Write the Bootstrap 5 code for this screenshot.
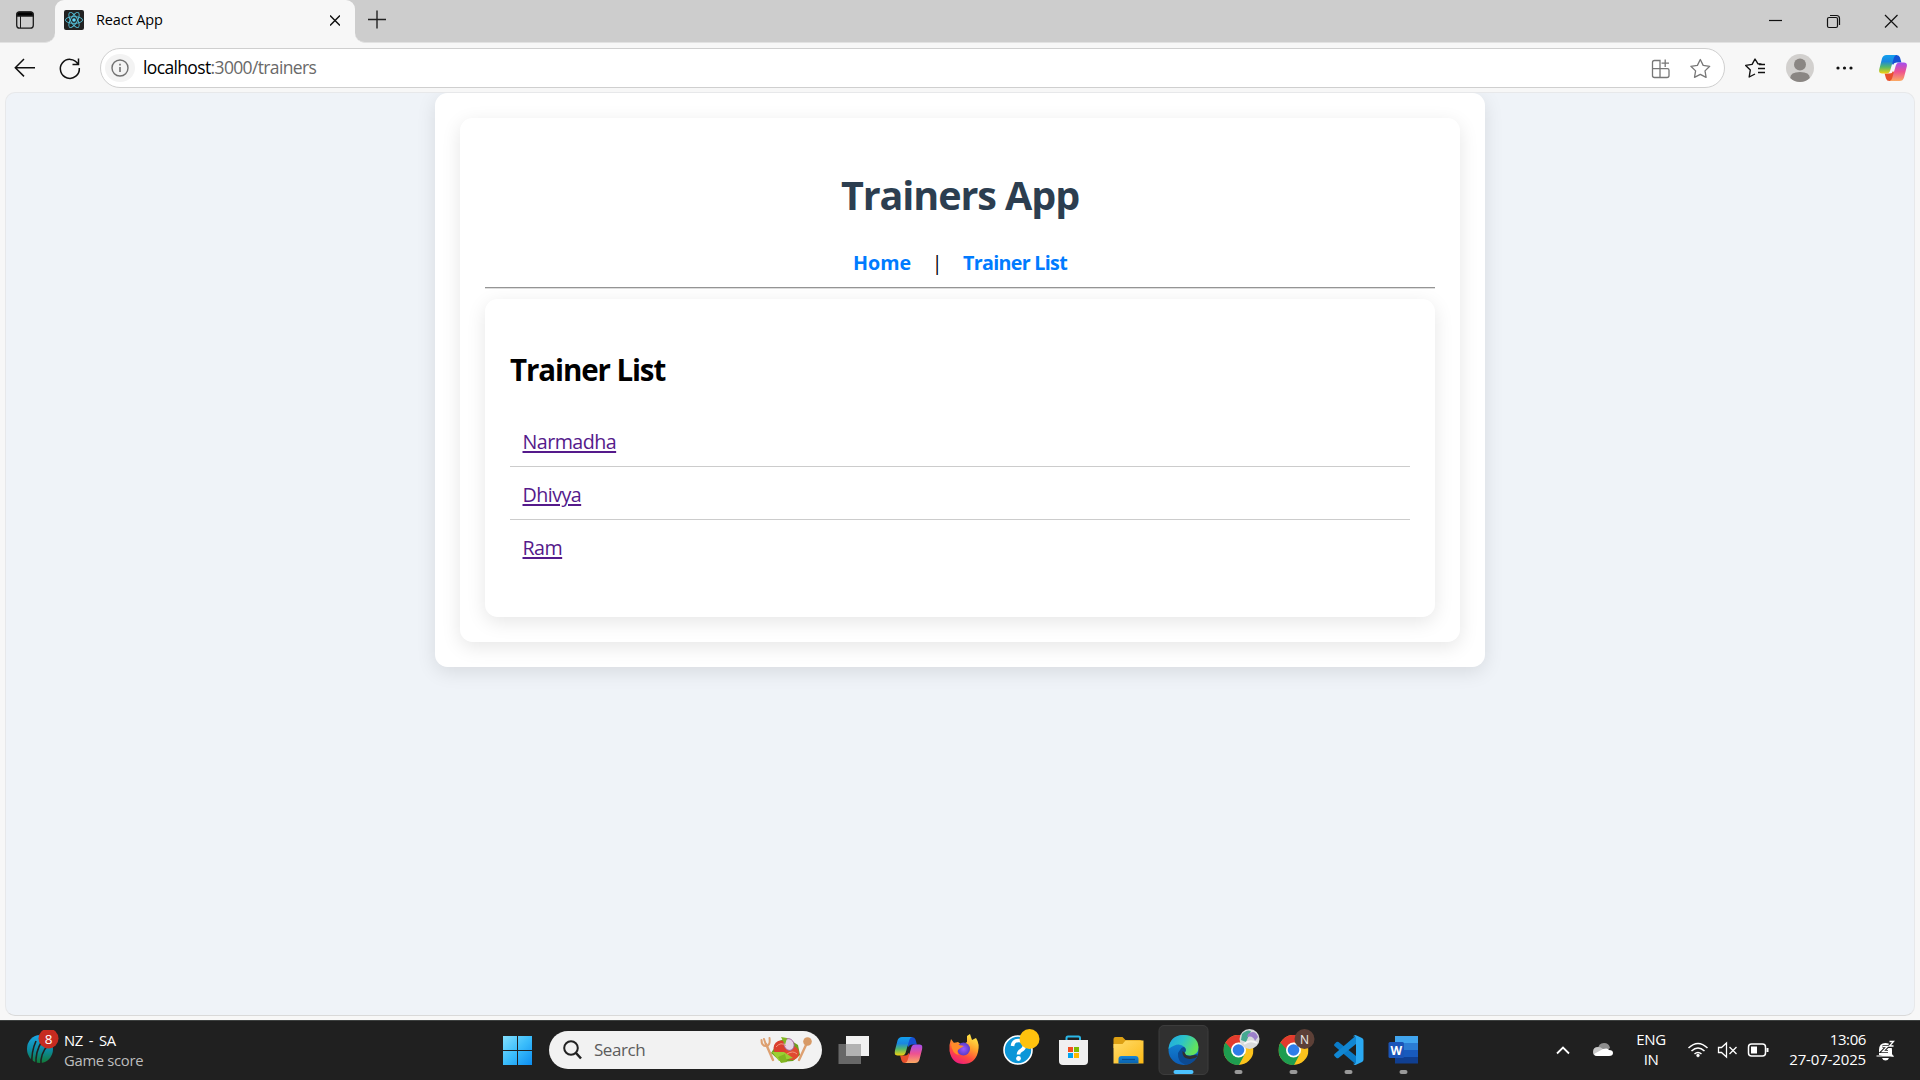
<!DOCTYPE html>
<html lang="en">
<head>
<meta charset="utf-8">
<title>React App</title>
<link href="https://cdn.jsdelivr.net/npm/bootstrap@5.3.0/dist/css/bootstrap.min.css" rel="stylesheet">
<style>
body{font-family:"Open Sans","Noto Sans",sans-serif;height:1080px;overflow:hidden;background:#f7f7f7;color:#000}
svg{display:block;flex:none}
.tabstrip{height:43px;background:#cdcdcd}
.tab-actions{width:55px;background:#cdcdcd;border-bottom-right-radius:10px;border-bottom:1px solid #e2e2e2}
.tab-under{background:#f7f7f7}
.browser-tab{width:300px;background:#f7f7f7;border-radius:9px 9px 0 0;padding:0 15px 3px 9px}
.tab-name{font-size:14.5px;line-height:20px;letter-spacing:-.12px;margin-left:12px}
.strip-rest{border-bottom-left-radius:10px;background:#cdcdcd;border-bottom:1px solid #e2e2e2}
.toolbar-row{height:49px}
.address{width:1625px;height:40px;margin-top:5px;margin-left:14px;border:1px solid #cfcfcf;border-radius:20px;background:#fff}
.info-dot{width:30px;height:28px;border-radius:50%;background:#f3f3f3;margin-left:4px}
.url{font-size:17.5px;line-height:24px;color:#696969;margin-left:8px;margin-bottom:2px;letter-spacing:-.64px}
.viewport{margin:0 5px 4px;height:924px;background:#eff3f8;border-radius:10px;border:1px solid #e7e8ea;border-bottom-color:#d9d9d9;overflow:hidden}
.panel{background:#fff;border-radius:12.5px;padding:25px;box-shadow:0 5px 19px rgba(0,0,0,.1)}
.app-wrap{width:1050px}
.app-title{font-size:39.500px;line-height:53px;font-weight:700;color:#2c3e50;margin:26px 0 27px;letter-spacing:-1.080px}
.app-nav{font-size:19.700px;line-height:27px;font-weight:700;margin-bottom:11px}
.app-nav a{color:#007bff;text-decoration:none}
.app-nav .to-list{letter-spacing:-.7px}
.divider{font-weight:400;margin:0 20.500px}
.rule{height:2px;background:#959595;border-bottom:1px solid #dedede;margin-bottom:10px}
.list-title{font-size:29.500px;line-height:40px;font-weight:700;margin:26px 0 24px;letter-spacing:-1.100px}
.trainers{margin:0 0 20px}
.trainers li{height:53px;padding:14px 12.5px 0;line-height:28px;font-size:19.700px;letter-spacing:-.55px;border-bottom:1px solid #ccc}
.trainers li:last-child{height:52px;border:0}
.trainers a{color:#551a8b;text-underline-offset:2px;text-decoration-thickness:2px}
.taskbar{height:60px;background:#202020;border-top:1px solid #3d403f;padding-bottom:1px;color:#fff}
.widget-box{width:490px;padding-left:26px}
.widget-text{font-size:14.8px;line-height:20px;letter-spacing:-.3px;margin-left:4px;padding-bottom:1px}
.fixture{word-spacing:2.200px}
.status-line{color:#bdbdbd}
.search-pill{width:273px;height:38px;border-radius:19px;background:#f2f2f2;margin-left:16px;margin-right:4px;padding:0 10px 0 14px;color:#5c5c5c;font-size:17px;letter-spacing:-.45px}
.search-label{margin-left:11px}
.tray-text{font-size:15px;line-height:20px;letter-spacing:-.4px;padding-bottom:2px}
.lang{width:54px}
.clock{width:94px}
.day{letter-spacing:-.15px}
</style>
<script src="https://cdn.jsdelivr.net/npm/bootstrap@5.3.0/dist/js/bootstrap.bundle.min.js"></script>
</head>
<body class="d-flex flex-column">
<svg width="0" height="0" class="position-absolute">
 <defs>
  <linearGradient id="cpA" x1="0" y1="0" x2="0" y2="1"><stop offset="0" stop-color="#12a0ee"/><stop offset=".35" stop-color="#1b87e0"/><stop offset=".65" stop-color="#55b86a"/><stop offset="1" stop-color="#f4d10d"/></linearGradient>
  <linearGradient id="cpB" x1="0" y1="0" x2="0" y2="1"><stop offset="0" stop-color="#a34ef0"/><stop offset=".5" stop-color="#ee5290"/><stop offset="1" stop-color="#fbaa62"/></linearGradient>
  <linearGradient id="win" gradientUnits="userSpaceOnUse" x1="503" y1="1036" x2="532" y2="1065"><stop offset="0" stop-color="#83dffd"/><stop offset=".5" stop-color="#3bbdfb"/><stop offset="1" stop-color="#0c8df0"/></linearGradient>
  <linearGradient id="fold" x1="0" y1="0" x2="1" y2="1"><stop offset="0" stop-color="#ffdc6c"/><stop offset="1" stop-color="#fcb914"/></linearGradient>
  <linearGradient id="blu" x1="0" y1="0" x2="0" y2="1"><stop offset="0" stop-color="#1687d9"/><stop offset="1" stop-color="#0961ad"/></linearGradient>
  <linearGradient id="edT" x1="0" y1="0" x2="1" y2=".4"><stop offset="0" stop-color="#1fa5e4"/><stop offset=".5" stop-color="#2cc3c9"/><stop offset="1" stop-color="#62e35c"/></linearGradient>
  <linearGradient id="edB" x1="0" y1="0" x2="0" y2="1"><stop offset="0" stop-color="#158fdc"/><stop offset="1" stop-color="#0c5cb5"/></linearGradient>
  <linearGradient id="ffx" x1=".8" y1="0" x2=".3" y2="1"><stop offset="0" stop-color="#fff04a"/><stop offset=".4" stop-color="#ffa12b"/><stop offset=".7" stop-color="#ff4d3d"/><stop offset="1" stop-color="#ec1a80"/></linearGradient>
  <radialGradient id="ffp"><stop offset="0" stop-color="#9a59ff"/><stop offset="1" stop-color="#5a3cc8"/></radialGradient>
  <linearGradient id="globe" x1="0" y1="0" x2="0" y2="1"><stop offset="0" stop-color="#1ba7e6"/><stop offset=".55" stop-color="#0c8a9d"/><stop offset="1" stop-color="#127a37"/></linearGradient>
  <symbol id="copilot" viewBox="0 0 28 26">
   <path d="M14 0h3.6q2.6 0 3.4 2.6l1.4 4.9h-5q-2.7 0-3.4 2.5L12 7z" fill="#1552d4"/>
   <path d="M14 26h-3.6Q7.800 26 7 23.400L5.600 18.500h5q2.700 0 3.400-2.500L16 19z" fill="#e8502c"/>
   <path d="M7.500 0h10q-2 .4-2.700 3l-3.600 12.500q-.9 3-3.800 3H3.200q-3.800 0-3-4L3 3.500Q4 0 7.500 0z" fill="url(#cpA)"/>
   <path d="M20.500 26h-10q2-.4 2.700-3l3.600-12.500q.9-3 3.800-3h4.200q3.800 0 3 4L25 22.500Q24 26 20.500 26z" fill="url(#cpB)"/>
  </symbol>
  <symbol id="chrome" viewBox="0 0 30 30">
   <circle cx="15" cy="15" r="15" fill="#fcc31c"/>
   <path d="M15 15L2 7.500A15 15 0 0 0 15.500 30L21.500 18.700z" fill="#1e9d50"/>
   <path d="M15 15H8.500L2 7.500A15 15 0 0 1 28 7.500H15z" fill="#e33b2e"/>
   <circle cx="15" cy="15" r="7.500" fill="#fff"/><circle cx="15" cy="15" r="5.800" fill="#2f7de9"/>
  </symbol>
 </defs>
</svg>

<header class="flex-shrink-0">
 <div class="tabstrip d-flex">
  <div class="tab-under"><div class="tab-actions h-100 d-flex align-items-center">
   <svg width="55" height="42" fill="none" stroke="#1b1b1b" stroke-width="1.300"><rect x="16.700" y="12.200" width="16.600" height="16" rx="3"/><path d="M17 14q0-2 2.500-2h11q2.500 0 2.500 2v2H17z" fill="#000"/><path d="M20.500 16v12" stroke-width="1"/></svg>
  </div></div>
  <div class="browser-tab d-flex align-items-center">
   <svg width="20" height="20" viewBox="0 0 20 20"><rect width="20" height="20" rx="2" fill="#222"/><g fill="none" stroke="#55bfd8" stroke-width=".9"><ellipse cx="10" cy="10" rx="8.600" ry="3.400"/><ellipse cx="10" cy="10" rx="8.600" ry="3.400" transform="rotate(60 10 10)"/><ellipse cx="10" cy="10" rx="8.600" ry="3.400" transform="rotate(120 10 10)"/></g><circle cx="10" cy="10" r="1.800" fill="#61dafb"/></svg>
   <span class="tab-name">React App</span>
   <svg class="ms-auto" width="10" height="12"><path d="M0 1.500l10 10M10 1.500L0 11.500" stroke="#111" stroke-width="1.500"/></svg>
  </div>
  <div class="tab-under flex-grow-1"><div class="strip-rest h-100 d-flex align-items-center">
   <svg width="44" height="42"><path d="M13 19.500h18M22 10.500v18" stroke="#222" stroke-width="1.400"/></svg>
   <svg class="ms-auto" width="170" height="42" fill="none" stroke="#111" stroke-width="1.200"><path d="M19 20.500h13"/><rect x="77.500" y="17.500" width="10" height="10" rx="1.500"/><path d="M80 15.500h6.500q3 0 3 3V25"/><path d="M135 15l12.500 12.500M147.500 15L135 27.500"/></svg>
  </div></div>
 </div>
 <div class="toolbar-row d-flex">
  <svg width="86" height="49" viewBox="0 1 86 49" fill="none" stroke="#111" stroke-width="1.500"><path d="M35 25.700H16M24 17l-8.700 8.700L24 34.400"/><path d="M78 22a9.500 9.500 0 1 0 1.300 4M78.500 16.500v6h-6"/></svg>
  <div class="address d-flex align-items-center">
   <div class="info-dot d-flex align-items-center justify-content-center"><svg width="18" height="18" fill="none" stroke="#717171" stroke-width="1.400"><circle cx="9" cy="9" r="8"/><path d="M9 8v5M9 4.800v1.700" stroke-width="1.600"/></svg></div>
   <div class="url"><span class="text-black">localhost</span>:3000/trainers</div>
   <svg class="ms-auto" width="76" height="38" fill="none" stroke="#777" stroke-width="1.300"><path d="M4.500 27.500v-14q0-2 2-2H12v17H6.500q-2 0-2-2zM4.500 19.700h15q1.500 0 1.500 1.500v5.300q0 2-2 2h-7.500M17.200 10.500v7.500M13.500 14.200h7.500"/><path d="M52.300 10.500l2.900 5.900 6.500.9-4.700 4.600 1.100 6.400-5.800-3-5.800 3 1.100-6.400-4.700-4.600 6.500-.9z" stroke-linejoin="round"/></svg>
  </div>
  <svg width="194" height="49" viewBox="1726 43 194 49" class="ms-auto"><g fill="none" stroke="#111" stroke-width="1.400" stroke-linejoin="round"><path d="M1761.500 64.300l-3.500-.5-3-4.800-2.900 5.400-6.400 1 4.600 4.600-1.100 7 5.800-3"/><path d="M1759 64.500h6M1758 68.500h7M1758 72.500h7"/></g>
   <circle cx="1800" cy="68" r="14" fill="#d2d0ce"/><circle cx="1800" cy="64.500" r="6" fill="#8a8683"/><path d="M1790.200 78Q1790.200 72 1800 72t9.800 6A14 14 0 0 1 1790.200 78z" fill="#8a8683"/>
   <g fill="#111"><circle cx="1838" cy="68" r="1.600"/><circle cx="1844.500" cy="68" r="1.600"/><circle cx="1851" cy="68" r="1.600"/></g>
   <use href="#copilot" x="1879" y="55" width="28" height="26"/></svg>
 </div>
</header>

<main class="viewport flex-shrink-0">
 <div class="panel app-wrap mx-auto">
  <div class="panel">
   <h1 class="app-title text-center">Trainers App</h1>
   <nav class="app-nav d-flex justify-content-center"><a href="#">Home</a><span class="divider">|</span><a href="#" class="to-list">Trainer List</a></nav>
   <div class="rule"></div>
   <section class="panel">
    <h2 class="list-title">Trainer List</h2>
    <ul class="trainers list-unstyled"><li><a href="#">Narmadha</a></li><li><a href="#">Dhivya</a></li><li><a href="#">Ram</a></li></ul>
   </section>
  </div>
 </div>
</main>

<footer class="taskbar d-flex align-items-center flex-shrink-0">
 <div class="widget-box d-flex align-items-center">
  <svg width="34" height="40" viewBox="26 1029 34 40"><ellipse cx="40" cy="1048" rx="13" ry="14" fill="url(#globe)"/><path d="M32 1064q-1-13 4-24M36 1064q-1-13 6-24M41 1064q-1-11 7-20" stroke="#202020" stroke-width="1.600" fill="none"/><circle cx="48.500" cy="1037.500" r="10" fill="#c62b20"/><text x="48.500" y="1042.500" font-size="13.500" fill="#fff" text-anchor="middle">8</text></svg>
  <div class="widget-text"><div class="fixture">NZ - SA</div><div class="status-line">Game score</div></div>
 </div>
 <svg width="43" height="60" viewBox="490 1020 43 60"><path d="M503 1036h14v14h-14zM518 1036h14v14h-14zM503 1051h14v14h-14zM518 1051h14v14h-14z" fill="url(#win)"/></svg>
 <div class="search-pill d-flex align-items-center">
  <svg width="20" height="20" fill="none" stroke="#222" stroke-width="2"><circle cx="8" cy="8" r="6.800"/><path d="M13 13l5 5.500" stroke-width="2.600"/></svg>
  <span class="search-label">Search</span>
  <svg class="ms-auto" width="52" height="28" viewBox="0 0 52 28"><g stroke="#dda071" stroke-width="2" fill="none" stroke-linecap="round"><path d="M6 8l7 16M46 9l-7 15" stroke-width="2.400"/><path d="M1.500 4q0 6 4.500 6t3.500-8M4 3l2 6"/></g><circle cx="47.500" cy="5.500" r="4.300" fill="#d79a67"/><path d="M11 17l8-12 8-3 11 7 2 10-7 6-12 1z" fill="#6f9f1c"/><circle cx="21" cy="12" r="7.500" fill="#db3f2e"/><circle cx="32" cy="17" r="7" fill="#e04a31"/><path d="M12 16l7 9 14-3-9-6z" fill="#9bcf32"/><ellipse cx="29" cy="8.500" rx="5" ry="6" fill="#e4d3e5" stroke="#9e5b96" stroke-width=".8" transform="rotate(-20 29 8.500)"/><path d="M21 1l6 1-2 7zM18 21l7-3 2 8-6 1z" fill="#82b622"/><path d="M16 11q5-6 10-1M27 18q6-4 10 0" stroke="#f39680" fill="none"/></svg>
 </div>
 <div class="d-flex">
  <svg width="55" height="60"><path d="M20 16h23v20H20z" fill="#f1f1f1"/><path d="M12.500 24H35v20H12.500z" fill="#777" fill-opacity=".82"/><path d="M20 24h15v12H20z" fill="#b2b2b2"/></svg>
  <svg width="55" height="60"><use href="#copilot" x="13.500" y="17" width="28" height="26"/></svg>
  <svg width="55" height="60"><path d="M15 19l3 4 4-1 4 3 5-3v-6l3-2 2 6 4-2q4 6 2 14-3 12-14.500 12T13.500 31q-.5-7 1.500-12z" fill="url(#ffx)"/><circle cx="27.500" cy="29" r="6.500" fill="url(#ffp)"/><path d="M15 24q5-3 8 1l5 1-5 3q-3 2 0 6-7-1-8-11z" fill="#ff8b29"/></svg>
  <svg width="55" height="60"><ellipse cx="27" cy="30" rx="14" ry="14" fill="#0b96d8" stroke="#fff" stroke-width="1.600"/><path d="M21.500 26q.5-5.500 6-5.500 6 0 6 5 0 3-3.500 5-2.500 1.500-2.500 4" fill="none" stroke="#fff" stroke-width="3.600"/><circle cx="27.500" cy="38.500" r="2.400" fill="#fff"/><circle cx="38.500" cy="19" r="10" fill="#ffc20e"/></svg>
  <svg width="55" height="60"><path d="M20.500 22v-4q0-1.500 1.500-1.500h10.500q1.500 0 1.500 1.500v4" fill="none" stroke="#2bb8e8" stroke-width="2"/><path d="M13 20h29v21q0 4-4 4H17q-4 0-4-4z" fill="#f0f0f0"/><path d="M22 27h5v5h-5z" fill="#f25022"/><path d="M28 27h5v5h-5z" fill="#7fba00"/><path d="M22 33h5v5h-5z" fill="#00a4ef"/><path d="M28 33h5v5h-5z" fill="#ffb900"/></svg>
  <svg width="55" height="60"><path d="M12.500 19q0-2 2-2h7l3 3h14q3 0 3 3v5h-29z" fill="#dda013"/><path d="M12.500 24h9l3-3.500h18v23h-30z" fill="url(#fold)"/><path d="M17.500 43.500V39q0-3 3-3h14q3 0 3 3v4.500z" fill="url(#blu)"/><path d="M21 39.500h13" stroke="#074e92" stroke-width="1.200"/></svg>
  <svg width="55" height="60"><rect x="3" y="5.500" width="49" height="49" rx="5" fill="#303030" stroke="#3c3c3c"/><circle cx="27.500" cy="30" r="15" fill="url(#edB)"/><path d="M24 30q3-6 9 0-2 6 9 4-2 9-12 11-9-3-8-12z" fill="#0c4a92"/><path d="M12.500 29Q14 15 27.500 15q14 0 15 12 0 8-8 8.500-5 .3-6-2.500 3-3 0-6-6-6-16 2z" fill="url(#edT)"/><path d="M26.500 31q-1 7 7 8 5 .5 8.500-3l-3-1q-9 3-10-2z" fill="#303030"/><rect x="17.500" y="50" width="20" height="4" rx="2" fill="#4cc2ff"/></svg>
  <svg width="55" height="60"><use href="#chrome" x="12.500" y="15" width="30" height="30"/><circle cx="38.500" cy="19" r="10" fill="#d8dadb"/><path d="M31 14q5-5 9-3l-5 11-5-2z" fill="#45a891"/><path d="M37 14q7-5 10 3l-3 4q-2-6-8-4z" fill="#9b80c9"/><path d="M33 24q6-5 13-1" stroke="#f5f5f5" stroke-width="2" fill="none"/><rect x="23.500" y="50" width="8" height="4" rx="2" fill="#999"/></svg>
  <svg width="55" height="60"><use href="#chrome" x="12.500" y="15" width="30" height="30"/><circle cx="38.500" cy="19" r="10" fill="#5d4037"/><text x="38.500" y="23.500" font-size="12" fill="#eee" text-anchor="middle">N</text><rect x="23.500" y="50" width="8" height="4" rx="2" fill="#999"/></svg>
  <svg width="55" height="60"><path d="M13.500 24l2-2q1-.6 2 0L35 36v8.500L13.500 26q-1-1 0-2z" fill="#0a7bc8"/><path d="M13.500 36l2 2q1 .6 2 0L35 24v-8.500L13.500 34q-1 1 0 2z" fill="#1187d3"/><path d="M34.500 15l6.500 3q1.500.8 1.500 2.500v19q0 1.700-1.500 2.500l-6.500 3q-1.500 0-2.500-1.500 3 1 3-1.500V18q0-2.500-3-1.500 1-1.500 2.500-1.500z" fill="#2aa9f2"/><rect x="23.500" y="50" width="8" height="4" rx="2" fill="#999"/></svg>
  <svg width="55" height="60"><path d="M19 16h23v7H19z" fill="#41a5ee"/><path d="M19 23h23v7H19z" fill="#2b7cd3"/><path d="M19 30h23v7H19z" fill="#185abd"/><path d="M19 37h23v6.500H19z" fill="#103f91"/><rect x="12.500" y="22" width="15.500" height="16" rx="1.500" fill="#1b55b8"/><text x="20.300" y="34.500" font-size="12" font-weight="700" fill="#fff" text-anchor="middle">W</text><rect x="23.500" y="50" width="8" height="4" rx="2" fill="#999"/></svg>
 </div>
 <svg class="ms-auto" width="74" height="60" viewBox="1550 1020 74 60"><path d="M1557 1053.500l6-6 6 6" fill="none" stroke="#fff" stroke-width="1.800"/><path d="M1598 1050q0-7 6-7 5 0 6 5l-5 4z" fill="#8d8d8d"/><path d="M1593 1052q0-5 5-5 3 0 5 2l6 4-8 3h-4q-4 0-4-4z" fill="#c9c9c9"/><path d="M1594 1054l9-5q5-1.500 6 1 4 0 4 3 0 3-4 3h-12q-2 0-3-2z" fill="#fff"/></svg>
 <div class="tray-text lang text-center"><div>ENG</div><div>IN</div></div>
 <svg width="94" height="60" viewBox="1678 1020 94 60" fill="none" stroke="#fff" stroke-width="1.500"><path d="M1688.500 1048q9.500-9 19 0M1691.500 1051q6.500-6 13 0M1694.500 1054q3.500-3 7 0"/><circle cx="1698" cy="1055.500" r="1.400" fill="#fff" stroke-width=".5"/><path d="M1718.500 1047.500h3l5-4.500v14l-5-4.500h-3zM1729.500 1047l7 7M1736.500 1047l-7 7" stroke-width="1.300"/><rect x="1748.500" y="1044" width="17" height="12" rx="3"/><rect x="1751" y="1046.500" width="6" height="7" fill="#fff" stroke="none"/><path d="M1767.500 1048v4" stroke-width="2"/></svg>
 <div class="tray-text clock text-end"><div>13:06</div><div class="day">27-07-2025</div></div>
 <svg width="54" height="60" viewBox="1866 1020 54 60"><path d="M1879 1055v-5q0-7 6.500-7t6.500 7v4l2 3zM1876.500 1055.500h17v1h-17zM1882 1058h7q-1 2.500-3.500 2.500t-3.500-2.500z" fill="#fff"/><path d="M1882.500 1046.500h5l-5 5h5.500M1889 1041.500h5l-5 5h5" stroke="#202020" stroke-width="3.200" fill="none"/><path d="M1882.500 1046.500h5l-5 5h5.500M1889.500 1041.500h4l-4 4.500h4" stroke="#fff" stroke-width="1.300" fill="none"/></svg>
</footer>
</body>
</html>
